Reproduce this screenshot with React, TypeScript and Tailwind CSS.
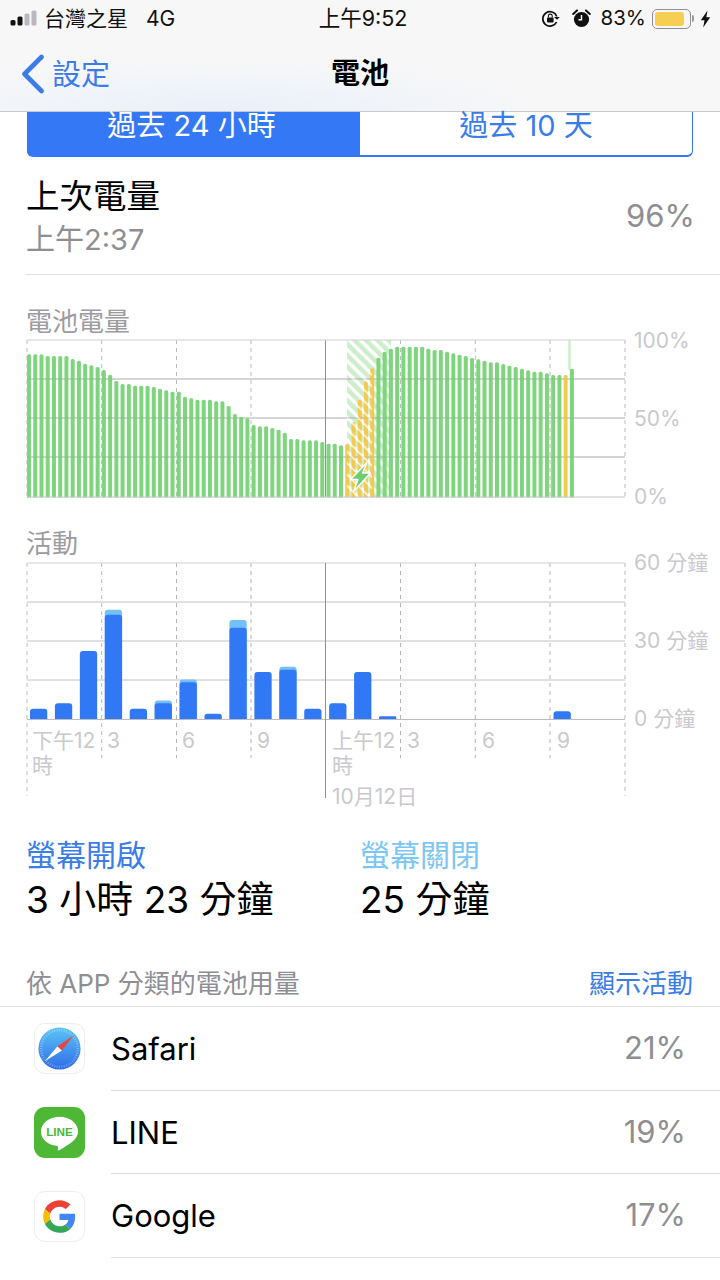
const FONT = "Inter, 'Noto Sans CJK TC', sans-serif";

const batteryTops = [
  163,163,163,168,168,168,168,177,182,191,196,201,210,224,243,252,252,257,257,257,261,266,271,275,275,290,295,299,299,299,304,304,318,342,351,355,375,379,379,384,389,398,417,417,421,421,421,426,431,431,436,
].map((z) => 300 + z / 3);
const batteryTops2 = [
  342,276,210,153,115,83,65,56,50,50,50,50,50,56,60,60,65,70,74,78,84,88,92,97,97,102,107,111,116,121,125,125,130,135,135,135,116,
].map((z) => 330 + z / 3);
const tops = [...batteryTops, ...batteryTops2];
const yellow = new Set([51, 52, 53, 54, 55, 86]);

const activity: [number, number][] = [
  [10.3, 0],[15.7, 0],[68, 0],[104.3, 5],[10.3, 0],[15.7, 2.7],[36.7, 2.7],[5.3, 0],[91.3, 7.7],[47, 0],[49.3, 3],[10.3, 0],[15.7, 0],[47, 0],[2.7, 0],[0, 0],[0, 0],[0, 0],[0, 0],[0, 0],[0, 0],[7.7, 0],
];

const dashXs = [27, 101.7, 176.5, 251, 400.5, 475.3, 550, 625];

function BatteryChart() {
  return (
    <svg width={720} height={176} viewBox="0 332 720 176" className="block shrink-0 overflow-visible">
      <defs>
        <pattern id="hatch" width="8" height="8" patternUnits="userSpaceOnUse" patternTransform="rotate(-45)">
          <rect width="8" height="8" fill="#ffffff" />
          <rect width="4.6" height="8" fill="#cdeeca" />
        </pattern>
        <pattern id="hatchW" width="8" height="8" patternUnits="userSpaceOnUse" patternTransform="rotate(-45)">
          <rect x="5" width="1.6" height="8" fill="#ffffff" fillOpacity="0.85" />
        </pattern>
      </defs>
      {dashXs.map((x) => (
        <line key={x} x1={x} x2={x} y1={340} y2={497} stroke="#bcbcc0" strokeDasharray="4 4" />
      ))}
      <rect x={347} y={340} width={44} height={157} fill="url(#hatch)" />
      <rect x={568.3} y={340} width={2.4} height={30} fill="#cdeeca" />
      {[379, 418, 457].map((y) => (
        <line key={y} x1={27} x2={625} y1={y} y2={y} stroke="#b9b9bd" />
      ))}
      <line x1={325.5} x2={325.5} y1={340} y2={497} stroke="#8f8f93" />
      {tops.map((t, i) => {
        const x = 27 + 6.24 * i;
        return (
          <rect key={i} x={x} y={t} width={4} height={497 - t + 2} rx={1.6} fill={yellow.has(i) ? "#f4c94f" : "#7ed57d"} />
        );
      })}
      <rect x={347} y={340} width={25} height={157} fill="url(#hatchW)" />
      {[379, 418, 457].map((y) => (
        <line key={y} x1={27} x2={625} y1={y} y2={y} stroke="#6b6b70" strokeOpacity="0.12" />
      ))}
      <rect x={20} y={497.5} width={610} height={4} fill="#ffffff" />
      <line x1={27} x2={625} y1={340} y2={340} stroke="#cfcfd2" strokeWidth="1.2" />
      <line x1={27} x2={625} y1={497} y2={497} stroke="#c6c6ca" />
      <path d="M367 462.5 L350.5 479.5 L358 479.5 L353.5 491.5 L370.5 473 L362.5 473 Z" fill="#6fce70" stroke="#ffffff" strokeWidth="1.4" strokeLinejoin="round" />
      <g fill="#c9c9ce" fontSize="21" fontFamily={FONT}>
        <text x={634} y={348}>100%</text>
        <text x={634} y={426}>50%</text>
        <text x={634} y={504}>0%</text>
      </g>
    </svg>
  );
}

function ActivityChart() {
  return (
    <svg width={720} height={259} viewBox="0 555 720 259" className="block shrink-0 overflow-visible">
      {[27, 625].map((x) => (
        <line key={x} x1={x} x2={x} y1={563} y2={796} stroke="#bcbcc0" strokeDasharray="4 4" />
      ))}
      {[101.7, 176.5, 251, 400.5, 475.3, 550].map((x) => (
        <line key={x} x1={x} x2={x} y1={563} y2={758} stroke="#b4b4b8" strokeDasharray="4 4" />
      ))}
      <line x1={27} x2={625} y1={563} y2={563} stroke="#cfcfd2" strokeWidth="1.2" />
      {[602, 641, 680].map((y) => (
        <line key={y} x1={27} x2={625} y1={y} y2={y} stroke="#c2c2c6" />
      ))}
      <line x1={27} x2={625} y1={719.5} y2={719.5} stroke="#bcbcc0" />
      <line x1={325.5} x2={325.5} y1={563} y2={798} stroke="#8f8f93" />
      {activity.map(([dark, light], i) => {
        if (!dark) return null;
        const x = 30 + 24.93 * i;
        const total = dark + light;
        const r = Math.min(3, dark / 2);
        return (
          <g key={i}>
            {light > 0 && <path d={`M${x} 719 V${719 - total + 3} q0 -3 3 -3 H${x + 14.3} q3 0 3 3 V719 Z`} fill="#74c0f8" />}
            <path d={`M${x} 719 V${719 - dark + r} q0 -${r} ${r} -${r} H${x + 17.3 - r} q${r} 0 ${r} ${r} V719 Z`} fill="#3178f4" />
          </g>
        );
      })}
      <g fill="#c9c9ce" fontSize="21" fontFamily={FONT}>
        <text x={634} y={570}>60 分鐘</text>
        <text x={634} y={648}>30 分鐘</text>
        <text x={634} y={726}>0 分鐘</text>
        <text x={32} y={748}>下午12</text>
        <text x={32} y={773}>時</text>
        <text x={107} y={748}>3</text>
        <text x={182} y={748}>6</text>
        <text x={257} y={748}>9</text>
        <text x={332} y={748}>上午12</text>
        <text x={332} y={773}>時</text>
        <text x={407} y={748}>3</text>
        <text x={482} y={748}>6</text>
        <text x={557} y={748}>9</text>
        <text x={332} y={804}>10月12日</text>
      </g>
    </svg>
  );
}

function SafariIcon() {
  const ticks = Array.from({ length: 48 }, (_, i) => i * 7.5);
  return (
    <svg viewBox="0 0 50 50" className="w-full h-full">
      <defs>
        <linearGradient id="saf" x1="0" y1="0" x2="0" y2="1">
          <stop offset="0" stopColor="#5cc4f6" />
          <stop offset="1" stopColor="#2e6ce9" />
        </linearGradient>
      </defs>
      <circle cx="25" cy="25" r="21.5" fill="url(#saf)" />
      {ticks.map((a) => (
        <line key={a} x1="25" y1="5" x2="25" y2="7.5" stroke="#ffffff" strokeOpacity="0.65" strokeWidth="0.5" transform={`rotate(${a} 25 25)`} />
      ))}
      <polygon points="39.5,11.5 27.5,27 22.8,23" fill="#e8453f" />
      <polygon points="10,38 22.8,23 27.5,27" fill="#ffffff" />
    </svg>
  );
}

function LineIcon() {
  return (
    <svg viewBox="0 0 50 50" className="w-full h-full">
      <path d="M25 9.5c-10 0-18.2 6.4-18.2 14.4 0 7.1 6.4 13.1 15 14.2.6.1 1.4.4 1.6 1 .2.5 0 2.4-.1 3 0 .5.5.8 1.2.4 1.2-.6 9.1-5.4 13.5-9 3.4-2.9 5.2-6.3 5.2-9.6 0-8-8.2-14.4-18.2-14.4z" fill="#ffffff" />
      <text x="25" y="28.5" textAnchor="middle" fontSize="11.5" fontWeight="700" fill="#4eb735" fontFamily="'Liberation Sans', sans-serif">LINE</text>
    </svg>
  );
}

function GoogleIcon() {
  return (
    <svg viewBox="-12 -12 72 72" className="w-full h-full">
      <path fill="#EA4335" d="M24 9.5c3.54 0 6.71 1.22 9.21 3.6l6.85-6.85C35.9 2.38 30.47 0 24 0 14.62 0 6.51 5.38 2.56 13.22l7.98 6.19C12.43 13.72 17.74 9.5 24 9.5z" />
      <path fill="#4285F4" d="M46.98 24.55c0-1.57-.15-3.09-.38-4.55H24v9.02h12.94c-.58 2.96-2.26 5.48-4.78 7.18l7.73 6c4.51-4.18 7.09-10.36 7.09-17.65z" />
      <path fill="#FBBC05" d="M10.53 28.59c-.48-1.45-.76-2.99-.76-4.59s.27-3.14.76-4.59l-7.98-6.19C.92 16.46 0 20.12 0 24c0 3.88.92 7.54 2.56 10.78l7.97-6.19z" />
      <path fill="#34A853" d="M24 48c6.48 0 11.93-2.13 15.89-5.81l-7.73-6c-2.15 1.45-4.92 2.3-8.16 2.3-6.26 0-11.57-4.22-13.47-9.91l-7.98 6.19C6.51 42.62 14.62 48 24 48z" />
    </svg>
  );
}

function StatusBar() {
  return (
    <div className="h-[37px] grid grid-cols-3 items-center px-[10px] text-[21px] leading-none text-[#111]">
      <div className="flex items-center">
        <svg width="30" height="16" viewBox="0 0 30 16" className="-mt-px">
          <rect x="0.5" y="10" width="5" height="5.5" rx="1.5" fill="#111" />
          <rect x="7.5" y="6.5" width="5" height="9" rx="1.5" fill="#111" />
          <rect x="14.5" y="3.5" width="5" height="12" rx="1.5" fill="#b9b9bd" />
          <rect x="21.5" y="0.5" width="5" height="15" rx="1.5" fill="#b9b9bd" />
        </svg>
        <span className="ml-[4px] whitespace-nowrap">台灣之星</span>
        <span className="ml-[18px]">4G</span>
      </div>
      <div className="text-center whitespace-nowrap text-[21.5px] pl-[6px]">上午9:52</div>
      <div className="flex items-center justify-end -mr-[1px]">
        <svg width="19" height="19" viewBox="0 0 19 19">
          <path d="M15.8 7.5A7.2 7.2 0 1 0 15.5 13" fill="none" stroke="#111" strokeWidth="1.7" />
          <path d="M13 8l3 2.8L18.8 8z" fill="#111" />
          <rect x="6" y="8.5" width="6.6" height="5" rx="1" fill="#111" />
          <path d="M7.4 8.5V7a1.9 1.9 0 0 1 3.8 0v1.5" fill="none" stroke="#111" strokeWidth="1.1" />
        </svg>
        <svg width="19" height="19" viewBox="0 0 19 19" className="ml-[12px]">
          <circle cx="9.5" cy="10.5" r="7.6" fill="#111" />
          <path d="M1.2 5 5 1.4M17.8 5 14 1.4" stroke="#111" strokeWidth="2" strokeLinecap="round" />
          <path d="M9.5 6v4.8H6.5" fill="none" stroke="#fff" strokeWidth="1.4" />
        </svg>
        <span className="ml-[10px] text-[20.5px]">83%</span>
        <div className="ml-[6px] w-[39px] h-[20px] rounded-[5px] border border-[#8f8f93] p-[2px]">
          <div className="w-[87%] h-full rounded-[3px] bg-[#f6cf52]" />
        </div>
        <div className="w-[2px] h-[7px] rounded-r-sm bg-[#9a9a9e] ml-px" />
        <svg width="11" height="18" viewBox="0 0 11 18" className="ml-[6px]">
          <path d="M7.5 0.5 0.8 10.2h3.7L3.2 17.5l7-10.2H6.3z" fill="#111" />
        </svg>
      </div>
    </div>
  );
}

function AppRow({ icon, name, pct, bordered }: { icon: React.ReactNode; name: string; pct: string; bordered?: boolean }) {
  return (
    <div className="h-[83.7px] shrink-0 flex items-center pl-[34px]">
      <div className={`w-[51px] h-[51px] rounded-[11px] overflow-hidden shrink-0 ${bordered ? "border border-[#eeeeef] bg-white" : "bg-[#4eb735]"}`}>{icon}</div>
      <div className="ml-[26px] flex-1 h-full flex items-center justify-between pr-[34px] border-b border-[#dcdcde]">
        <span className="text-[31px] text-black pt-[2px]">{name}</span>
        <span className="text-[31px] text-[#8e8e93]">{pct}</span>
      </div>
    </div>
  );
}

export default function App() {
  return (
    <div style={{ fontFamily: FONT }} className="w-[720px] h-[1280px] overflow-hidden bg-white flex flex-col">
      <header className="h-[112px] shrink-0 border-b border-[#c8c8ca] bg-[#f7f7f8] bg-[radial-gradient(ellipse_320px_50px_at_220px_112px,#e8f0fa,transparent)]">
        <StatusBar />
        <div className="relative h-[74px] flex items-center justify-center">
          <div className="absolute left-[21px] top-[17px] flex items-center text-[#3a7ce8]">
            <svg width="24" height="40" viewBox="0 0 24 40">
              <path d="M20.5 3 3.5 20l17 17" fill="none" stroke="#3a7ce8" strokeWidth="4.6" strokeLinecap="round" strokeLinejoin="round" />
            </svg>
            <span className="ml-[7px] text-[29px] leading-none">設定</span>
          </div>
          <span className="text-[29px] font-bold text-black leading-none -mt-[1px]">電池</span>
        </div>
      </header>

      <main className="flex-1 flex flex-col">
        <div className="mx-[27px] h-[45px] shrink-0 grid grid-cols-2 rounded-b-[6px] border-x border-b-2 border-[#3478f6] text-[29px] leading-[28px]">
          <div className="bg-[#3478f6] text-white text-center pr-[4px] -ml-px w-[333px] rounded-bl-[4px]">過去 24 小時</div>
          <div className="text-[#3a7ce8] text-center">過去 10 天</div>
        </div>

        <div className="ml-[26px] h-[118px] shrink-0 flex items-center justify-between pr-[25px] pt-[5px] border-b border-[#dfdfe1]">
          <div className="flex flex-col">
            <span className="text-[33.5px] leading-[42px] text-black">上次電量</span>
            <span className="text-[29px] leading-[42px] mt-[2px] text-[#8e8e93]">上午2:37</span>
          </div>
          <span className="text-[31px] text-[#8e8e93] mt-[-4px]">96%</span>
        </div>

        <div className="pl-[26px] h-[57px] shrink-0 flex items-end text-[26px] leading-[34px] text-[#9b9ba0]">
          <span className="relative top-[7px]">電池電量</span>
        </div>
        <BatteryChart />
        <div className="pl-[26px] h-[47px] shrink-0 flex items-end text-[26px] leading-[34px] text-[#9b9ba0]">
          <span className="relative top-[6px]">活動</span>
        </div>
        <ActivityChart />

        <div className="grid grid-cols-[334px_1fr] pl-[26px] mt-[21px] shrink-0">
          <div className="flex flex-col">
            <span className="text-[30px] leading-[40px] text-[#3a7ce8]">螢幕開啟</span>
            <span className="text-[37px] leading-[50px] text-black">3 小時 23 分鐘</span>
          </div>
          <div className="flex flex-col">
            <span className="text-[30px] leading-[40px] text-[#7cc6f3]">螢幕關閉</span>
            <span className="text-[37px] leading-[50px] text-black">25 分鐘</span>
          </div>
        </div>

        <div className="mt-[36px] h-[46px] shrink-0 pl-[26px] pr-[27px] flex items-center justify-between text-[26px] leading-none border-b border-[#dcdcde]">
          <span className="text-[#8e8e93]">依 APP 分類的電池用量</span>
          <span className="text-[#3a7ce8]">顯示活動</span>
        </div>

        <AppRow icon={<SafariIcon />} name="Safari" pct="21%" bordered />
        <AppRow icon={<LineIcon />} name="LINE" pct="19%" />
        <AppRow icon={<GoogleIcon />} name="Google" pct="17%" bordered />
      </main>
    </div>
  );
}
